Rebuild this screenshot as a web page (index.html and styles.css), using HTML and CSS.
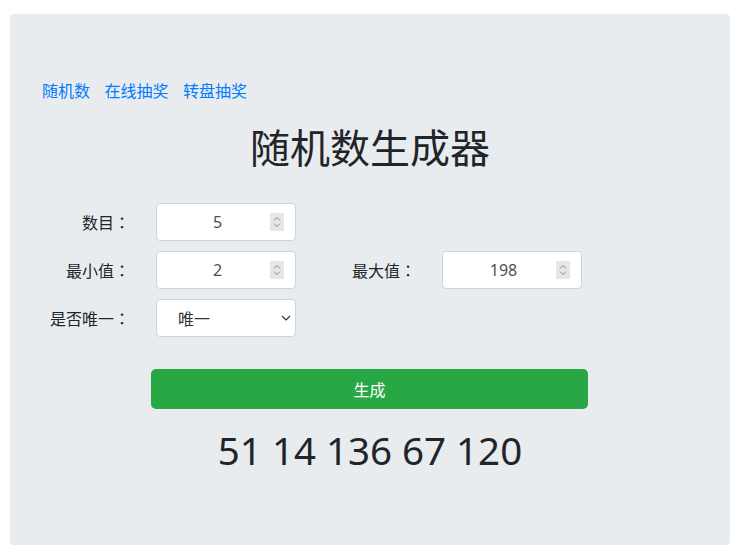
FILE: index.html
```html
<!DOCTYPE html>
<html lang="zh">
<head>
<meta charset="utf-8">
<title>随机数生成器</title>
<link rel="stylesheet" href="styles.css">
</head>
<body>
<div class="jumbotron">
  <nav class="nav">
    <a href="#">随机数</a>
    <a href="#">在线抽奖</a>
    <a href="#">转盘抽奖</a>
  </nav>
  <h1 class="title">随机数生成器</h1>
  <form class="form">
    <label class="lbl">数目<span class="colon">：</span></label>
    <div class="field num"><span class="val">5</span><svg class="spin" width="14" height="18" viewBox="0 0 14 18"><rect width="14" height="18" fill="#e6e6ea"/><path d="M4 7.5 L7 4.5 L10 7.5" fill="none" stroke="#8a8a8e" stroke-width="1"/><path d="M4 10.5 L7 13.5 L10 10.5" fill="none" stroke="#8a8a8e" stroke-width="1"/></svg></div>
    <span></span><span></span>
    <label class="lbl">最小值<span class="colon">：</span></label>
    <div class="field num"><span class="val">2</span><svg class="spin" width="14" height="18" viewBox="0 0 14 18"><rect width="14" height="18" fill="#e6e6ea"/><path d="M4 7.5 L7 4.5 L10 7.5" fill="none" stroke="#8a8a8e" stroke-width="1"/><path d="M4 10.5 L7 13.5 L10 10.5" fill="none" stroke="#8a8a8e" stroke-width="1"/></svg></div>
    <label class="lbl">最大值<span class="colon">：</span></label>
    <div class="field num"><span class="val">198</span><svg class="spin" width="14" height="18" viewBox="0 0 14 18"><rect width="14" height="18" fill="#e6e6ea"/><path d="M4 7.5 L7 4.5 L10 7.5" fill="none" stroke="#8a8a8e" stroke-width="1"/><path d="M4 10.5 L7 13.5 L10 10.5" fill="none" stroke="#8a8a8e" stroke-width="1"/></svg></div>
    <label class="lbl">是否唯一<span class="colon">：</span></label>
    <div class="field sel"><span class="opt">唯一</span><svg class="chev" width="10" height="6" viewBox="0 0 10 6"><path d="M1 1 L5 5 L9 1" fill="none" stroke="#333" stroke-width="1.2"/></svg></div>
  </form>
  <button class="btn" type="button">生成</button>
  <div class="result">51 14 136 67 120</div>
</div>
</body>
</html>
```
FILE: styles.css
```css
html, body {
  margin: 0;
  padding: 0;
  background: #fff;
}
body {
  padding: 14px 19px 11px 10px;
  font-family: "Noto Sans", "Noto Sans CJK SC", sans-serif;
  color: #212529;
}
.jumbotron {
  background: #e9ecef;
  border-radius: 4px;
  height: 531px;
  box-sizing: border-box;
  padding: 64px 32px 0 32px;
}
.nav {
  display: flex;
  gap: 14.5px;
  height: 24px;
  align-items: center;
}
.nav a {
  color: #007bff;
  text-decoration: none;
  font-size: 16px;
  line-height: 24px;
  font-family: "Noto Sans CJK SC", sans-serif;
}
.title {
  margin: 20px 0 33px;
  font-size: 40px;
  line-height: 48px;
  font-weight: 400;
  text-align: center;
  font-family: "Noto Sans CJK SC", sans-serif;
}
.form {
  display: grid;
  grid-template-columns: 88px 140px 94px 140px;
  column-gap: 26px;
  row-gap: 10px;
}
.lbl {
  display: flex;
  align-items: center;
  justify-content: flex-end;
  font-size: 16px;
  font-family: "Noto Sans CJK SC", sans-serif;
  white-space: nowrap;
}
.colon {
  font-family: "Noto Sans CJK TC", sans-serif;
}
.field {
  height: 38px;
  box-sizing: border-box;
  background: #fff;
  border: 1px solid #ced4da;
  border-radius: 4px;
  display: flex;
  align-items: center;
  font-size: 16px;
  color: #495057;
}
.num {
  padding: 0 11px 0 12px;
}
.val {
  flex: 1;
  text-align: center;
}
.spin {
  flex: none;
  display: block;
  margin-left: 4px;
}
.sel {
  padding: 0 4px 0 21px;
  justify-content: space-between;
}
.opt {
  font-family: "Noto Sans CJK SC", sans-serif;
  color: #333;
}
.chev {
  display: block;
}
.btn {
  display: block;
  margin: 32px 0 0 109px;
  width: 437px;
  height: 40px;
  border: none;
  border-radius: 5px;
  background: #28a745;
  color: #fff;
  font-size: 16px;
  font-family: "Noto Sans CJK SC", sans-serif;
}
.result {
  margin-top: 17px;
  text-align: center;
  font-size: 38.5px;
  line-height: 48px;
}
```
